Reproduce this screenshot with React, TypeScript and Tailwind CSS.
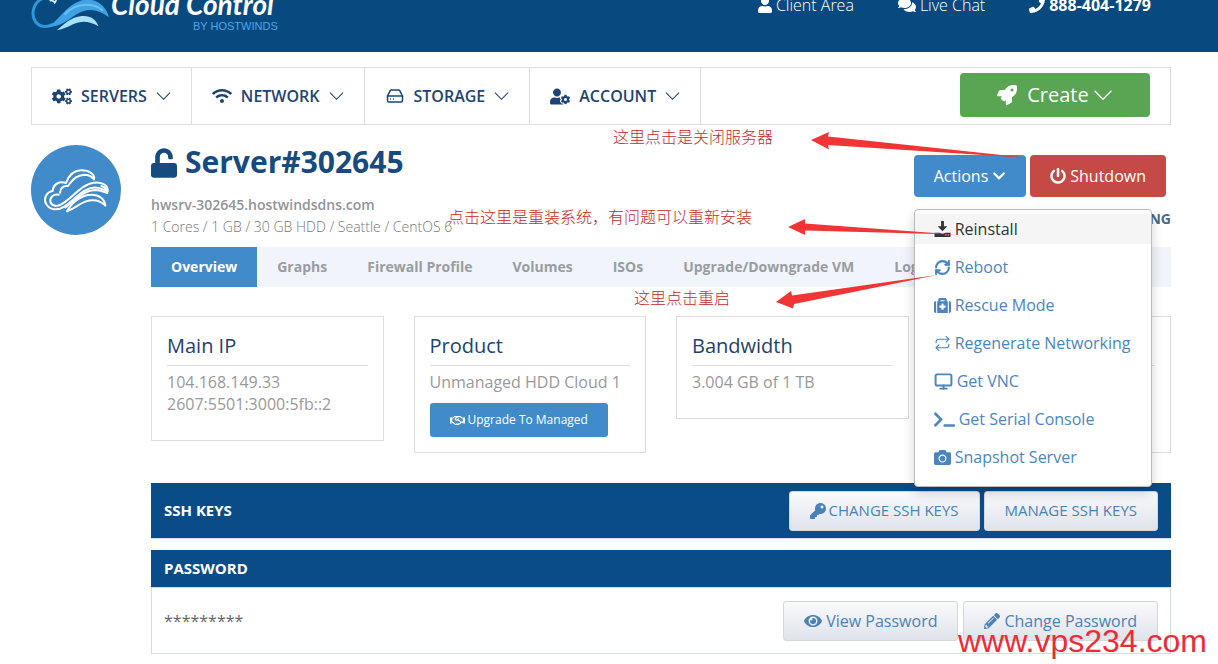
import type { ReactNode } from "react";
import { HardDrive, Monitor, RefreshCw, Repeat } from "lucide-react";
import {
  FaCamera,
  FaChevronDown,
  FaCogs,
  FaComments,
  FaEye,
  FaKey,
  FaMedkit,
  FaPencilAlt,
  FaPhone,
  FaPowerOff,
  FaRegHandshake,
  FaRocket,
  FaTerminal,
  FaUnlock,
  FaUser,
  FaUserCog,
  FaWifi,
} from "react-icons/fa";

function ThinChevron({ className }: { className?: string }) {
  return (
    <svg viewBox="0 0 16 10" fill="none" stroke="currentColor" strokeWidth="1.2" className={className}>
      <path d="M1 1.5l7 7 7-7" />
    </svg>
  );
}

function ReinstallIcon() {
  return (
    <svg viewBox="0 0 17 17" fill="currentColor" className="w-[17px] h-4">
      <path d="M7 0h3v5.5h3.6L8.5 11 3.4 5.5H7z" />
      <path d="M0 12.5h5.5l3 1.2 3-1.2H17V17H0z" />
      <path d="M11.5 14.8h1.3M14 14.8h1.3" stroke="#f5f5f5" />
    </svg>
  );
}

function BrandLogo() {
  return (
    <svg viewBox="30 0 240 96" className="w-20 h-8" fill="none" strokeLinecap="round">
      <path d="M64 -4C36 8 30 44 42 62c10 18 32 22 52 12" stroke="#2f96d8" strokeWidth="9" />
      <path d="M82 80C116 58 136 16 178 2c42-12 76 12 86 50-32-26-66-30-100-8-26 18-46 36-82 36z" fill="#3fa2e2" />
      <path d="M132 42c30-30 76-38 112-12" stroke="#69bff0" strokeWidth="6" />
      <path d="M108 91c20-18 42-40 74-43 26-2 44 10 50 31-26-16-50-18-76-6-16 8-30 14-48 18z" fill="#a9e0fa" />
      <path d="M88 2q8-2 13 6l4-6" stroke="#dff4ff" strokeWidth="5" />
    </svg>
  );
}

function CloudBadge() {
  return (
    <div className="size-[90px] shrink-0 rounded-full bg-[#428bca]">
      <svg
        viewBox="-15 -45 270 270"
        className="size-full"
        fill="none"
        stroke="#fff"
        strokeWidth="6"
        strokeLinecap="round"
        strokeLinejoin="round"
      >
        <path d="M72 98c2-14 10-22 24-20 18-26 30-32 48-34 14 0 24 6 30 14 4-14-14-28-40-27-24 1-36 16-44 38-20-6-38 2-40 24-20 4-28 24-20 38 10 20 36 22 56 8 38-28 64-60 96-56 14 2 26 8 33 11 2-20-18-28-41-26-38 4-68 50-100 66-14 8-30 2-31-10-1-14 10-22 25-20" />
        <path d="M88 142c34-24 54-50 88-52 14 0 26 4 38 9 0-10-8-18-18-21" />
        <path d="M93 154c14-26 44-50 72-50 24-1 42 14 43 33-16-16-36-20-60-12-20 8-34 20-55 29z" />
      </svg>
    </div>
  );
}

const menu = [
  { label: "SERVERS", icon: <FaCogs className="w-5 h-[17px]" /> },
  { label: "NETWORK", icon: <FaWifi className="w-5 h-4" /> },
  { label: "STORAGE", icon: <HardDrive strokeWidth={2} className="w-5 h-[18px]" /> },
  { label: "ACCOUNT", icon: <FaUserCog className="w-5 h-[17px]" /> },
];

const tabs = ["Overview", "Graphs", "Firewall Profile", "Volumes", "ISOs", "Upgrade/Downgrade VM", "Logs"];

const actions = [
  { label: "Reinstall", icon: <ReinstallIcon /> },
  { label: "Reboot", icon: <RefreshCw strokeWidth={3} className="size-[17px]" /> },
  { label: "Rescue Mode", icon: <FaMedkit className="size-[17px]" /> },
  { label: "Regenerate Networking", icon: <Repeat strokeWidth={1.5} className="size-[17px]" /> },
  { label: "Get VNC", icon: <Monitor strokeWidth={2.5} className="size-[19px]" /> },
  { label: "Get Serial Console", icon: <FaTerminal className="w-[21px] h-[17px]" /> },
  { label: "Snapshot Server", icon: <FaCamera className="size-[17px]" /> },
];

function Card({ title, className, children }: { title?: string; className?: string; children?: ReactNode }) {
  return (
    <section className={`border border-[#ddd] px-[15px] pt-[15px] ${className}`}>
      <h2 className="h-[34px] border-b border-[#ddd] text-xl leading-7 text-[#1c436e]">{title}</h2>
      <div className="pt-[5px] leading-[22px] text-[#999]">{children}</div>
    </section>
  );
}

function LightButton({ className, children }: { className?: string; children: ReactNode }) {
  return (
    <button
      type="button"
      className={`flex h-10 items-center rounded-[3px] border border-[#d3d6dc] bg-linear-to-b from-[#fafafc] to-[#dfe3ea] px-5 text-[#4a82b8] ${className}`}
    >
      {children}
    </button>
  );
}

function ActionsMenu() {
  return (
    <div className="relative">
      <button
        type="button"
        aria-expanded="true"
        className="flex h-[42px] items-center gap-1 rounded bg-[#428bca] px-5 text-white"
      >
        Actions <FaChevronDown className="size-[14px]" />
      </button>
      <ul className="absolute top-[54px] left-0 z-10 flex w-[238px] flex-col gap-2 rounded border border-[#bbb] bg-white pt-1 pb-[14px] shadow-[0_6px_12px_rgba(0,0,0,0.18)]">
        {actions.map(({ label, icon }, i) => (
          <li key={label}>
            <a
              href="#"
              className={`flex h-[30px] items-center gap-1 px-[19px] whitespace-nowrap ${
                i === 0 ? "bg-[#f5f5f5] text-[#333]" : "text-[#4a86bd]"
              }`}
            >
              {icon}
              {label}
            </a>
          </li>
        ))}
      </ul>
    </div>
  );
}

function Annotations() {
  return (
    <div className="pointer-events-none absolute inset-0 z-20 font-['Noto_Sans_CJK_SC',sans-serif] leading-5 font-light whitespace-nowrap text-[#c62828]">
      <p className="absolute top-[126px] left-[613px]">这里点击是关闭服务器</p>
      <p className="absolute top-[206px] left-[448px]">点击这里是重装系统，有问题可以重新安装</p>
      <p className="absolute top-[287px] left-[634px]">这里点击重启</p>
      <svg width="1218" height="664" fill="#f13434" className="absolute top-0 left-0 max-w-none">
        <path d="M811 140l18-8-1 4.5 202 21.5-202-13 1 4.5z" />
        <path d="M788 227l17-8v4.5l150 11-150-4v4.5z" />
        <path d="M776 302l15-11 1 4.5 145-20.5-143 29-1 4.5z" />
      </svg>
      <p className="absolute top-[623px] left-[958px] font-['Liberation_Sans',sans-serif] text-[32px] leading-9 font-normal text-[#f02a34]">
        www.vps234.com
      </p>
    </div>
  );
}

export default function App() {
  return (
    <div className="relative min-h-screen overflow-hidden bg-white pb-[10px] font-['Open_Sans',sans-serif] text-base">
      <header className="flex h-[52px] items-start justify-between overflow-hidden bg-[#084a80] pr-[67px] pl-[31px] text-white">
        <a href="#" className="flex">
          <BrandLogo />
          <span className="-mt-[10px] flex flex-col">
            <span className="font-[Lato,sans-serif] text-[28px] leading-7 font-bold italic">Cloud Control</span>
            <span className="-mr-1 self-end font-['Liberation_Sans',sans-serif] text-[11px] leading-4 text-[#4ba6e8]">
              BY HOSTWINDS
            </span>
          </span>
        </a>
        <nav className="-mt-[7px] flex gap-11 leading-6 font-light">
          <a href="#" className="flex items-center gap-1">
            <FaUser className="w-[14px] h-4" /> Client Area
          </a>
          <a href="#" className="flex items-center gap-1">
            <FaComments className="size-[18px]" /> Live Chat
          </a>
          <a href="#" className="flex items-center gap-1 font-bold">
            <FaPhone className="size-4" /> 888-404-1279
          </a>
        </nav>
      </header>

      <div className="mt-[15px] pr-[47px] pl-[31px]">
        <nav className="flex h-[58px] items-center border border-[#ddd] pr-5">
          {menu.map(({ label, icon }) => (
            <button
              key={label}
              type="button"
              className="flex h-full items-center gap-[9px] border-r border-[#ddd] px-5 font-semibold text-[#1c4573]"
            >
              {icon}
              {label}
              <ThinChevron className="w-[15px] h-[10px]" />
            </button>
          ))}
          <button
            type="button"
            className="mb-[2px] ml-auto flex h-11 w-[190px] items-center justify-center rounded bg-[#5aa553] text-xl text-white"
          >
            <FaRocket className="mr-[10px] size-5" />
            Create
            <ThinChevron className="ml-1 w-5 h-3" />
          </button>
        </nav>

        <div className="mt-5 flex gap-[30px]">
          <CloudBadge />

          <main className="min-w-0 flex-1">
            <div className="flex justify-between">
              <div>
                <h1 className="flex h-9 items-center gap-2 text-[30px] leading-8 font-bold text-[#174a7e]">
                  <FaUnlock className="w-[26px] h-[30px]" />
                  <span className="pb-[2px]">Server#302645</span>
                </h1>
                <p className="mt-[13px] text-sm leading-[22px] font-semibold text-[#909498]">
                  hwsrv-302645.hostwindsdns.com
                </p>
                <p className="text-sm leading-[22px] font-light text-[#777]">
                  1 Cores / 1 GB / 30 GB HDD / Seattle / CentOS 6
                </p>
              </div>
              <div className="mt-[10px]">
                <div className="flex gap-1 pr-[5px]">
                  <ActionsMenu />
                  <button
                    type="button"
                    className="flex h-[42px] items-center gap-1 rounded bg-[#c54945] px-5 text-white"
                  >
                    <FaPowerOff className="size-4" /> Shutdown
                  </button>
                </div>
                <p className="mt-3 text-right text-sm leading-5 font-bold text-[#4a6886]">RUNNING</p>
              </div>
            </div>

            <nav className="mt-[9px] flex h-10 overflow-hidden bg-[#f1f4fb] text-sm font-bold whitespace-nowrap">
              {tabs.map((tab, i) => (
                <a
                  key={tab}
                  href="#"
                  className={`flex items-center px-5 ${i === 0 ? "bg-[#428bca] text-white" : "text-[#999da1]"}`}
                >
                  {tab}
                </a>
              ))}
            </nav>

            <div className="mt-[29px] grid grid-cols-4 items-start gap-[30px]">
              <Card title="Main IP" className="pb-[25px]">
                <p>104.168.149.33</p>
                <p>2607:5501:3000:5fb::2</p>
              </Card>
              <Card title="Product" className="pb-[15px]">
                <p className="whitespace-nowrap">Unmanaged HDD Cloud 1</p>
                <button
                  type="button"
                  className="mt-[10px] flex h-[34px] items-center gap-[3px] rounded-[3px] bg-[#428bca] px-5 text-xs whitespace-nowrap text-white"
                >
                  <FaRegHandshake className="size-[15px]" /> Upgrade To Managed
                </button>
              </Card>
              <Card title="Bandwidth" className="pb-[25px]">
                <p>3.004 GB of 1 TB</p>
              </Card>
              <Card className="min-h-[137px]" />
            </div>

            <section className="mt-[30px] flex h-14 items-center justify-between border-b border-[#d5dfee] bg-[#0a4c88] px-[13px]">
              <h2 className="text-[15px] font-bold text-white">SSH KEYS</h2>
              <div className="flex gap-1">
                <LightButton className="gap-[3px] text-[15px]">
                  <FaKey className="size-4" /> CHANGE SSH KEYS
                </LightButton>
                <LightButton className="text-[15px]">MANAGE SSH KEYS</LightButton>
              </div>
            </section>

            <section className="mt-[11px]">
              <h2 className="flex h-[37px] items-center bg-[#0a4c88] px-[13px] text-[15px] font-bold text-white">
                PASSWORD
              </h2>
              <div className="flex h-[67px] items-center justify-between border border-[#d5d9e0] px-3">
                <span className="text-[#666]">*********</span>
                <div className="flex gap-[5px]">
                  <LightButton className="gap-1">
                    <FaEye className="size-[18px]" /> View Password
                  </LightButton>
                  <LightButton className="gap-1">
                    <FaPencilAlt className="size-4" /> Change Password
                  </LightButton>
                </div>
              </div>
            </section>
          </main>
        </div>
      </div>

      <Annotations />
    </div>
  );
}
